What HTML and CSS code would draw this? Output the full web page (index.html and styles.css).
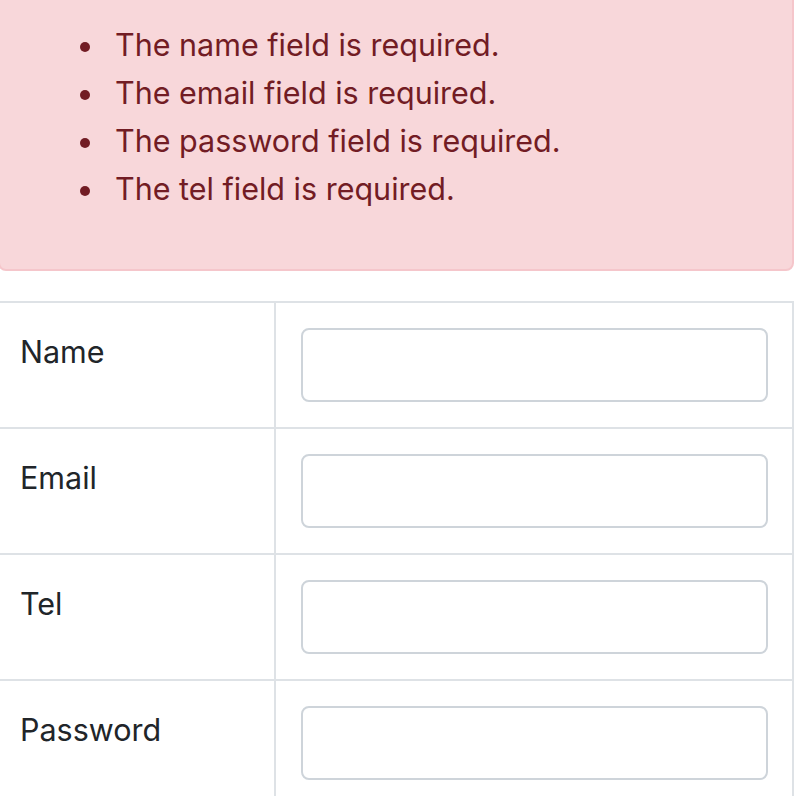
FILE: index.html
```html
<!DOCTYPE html>
<html lang="en">
<head>
    <meta charset="UTF-8">
    <meta name="viewport" content="width=device-width, initial-scale=1.0">
    <title>Register</title>
    <link rel="stylesheet" href="styles.css">
</head>
<body>
    <div class="page">
        <div class="alert alert-danger">
            <ul>
                <li>The name field is required.</li>
                <li>The email field is required.</li>
                <li>The password field is required.</li>
                <li>The tel field is required.</li>
            </ul>
        </div>

        <form class="form">
            <table class="table">
                <tr>
                    <td class="label">Name</td>
                    <td class="field"><input type="text" name="name" class="form-control"></td>
                </tr>
                <tr>
                    <td class="label">Email</td>
                    <td class="field"><input type="email" name="email" class="form-control"></td>
                </tr>
                <tr>
                    <td class="label">Tel</td>
                    <td class="field"><input type="tel" name="tel" class="form-control"></td>
                </tr>
                <tr>
                    <td class="label">Password</td>
                    <td class="field"><input type="password" name="password" class="form-control"></td>
                </tr>
            </table>
        </form>
    </div>
</body>
</html>
```

FILE: styles.css
```css
html, body {
    margin: 0;
    padding: 0;
    background-color: #fff;
    font-family: Inter, "Noto Sans", sans-serif;
    font-size: 30.5px;
    line-height: 48px;
    color: #212529;
    overflow: hidden;
}
.page {
    width: 796px;
    margin: -30px 0 0 -2px;
}
.alert {
    padding: 49px 40px 56px 53px;
    border: 2px solid #f5c6cb;
    border-radius: 8px;
    margin-bottom: 30px;
}
.alert-danger {
    background-color: #f8d7da;
    color: #721c24;
}
.alert ul {
    margin: 0;
    padding-left: 62px;
    list-style: none;
}
.alert li::before {
    content: "";
    display: inline-block;
    width: 10px;
    height: 10px;
    border-radius: 50%;
    background-color: currentColor;
    margin-left: -35px;
    margin-right: 25px;
    vertical-align: 4px;
}
.table {
    width: 100%;
    border-collapse: collapse;
}
.table td {
    border: 2px solid #dee2e6;
    padding: 25px 24px;
    vertical-align: top;
}
.table td.label {
    width: 230px;
    padding-left: 20px;
}
.table td.field {
    padding-left: 25px;
}
.form-control {
    display: block;
    box-sizing: border-box;
    width: 100%;
    height: 74px;
    padding: 12px 24px;
    font: inherit;
    border: 2px solid #ced4da;
    border-radius: 8px;
    background-color: #fff;
}
```
